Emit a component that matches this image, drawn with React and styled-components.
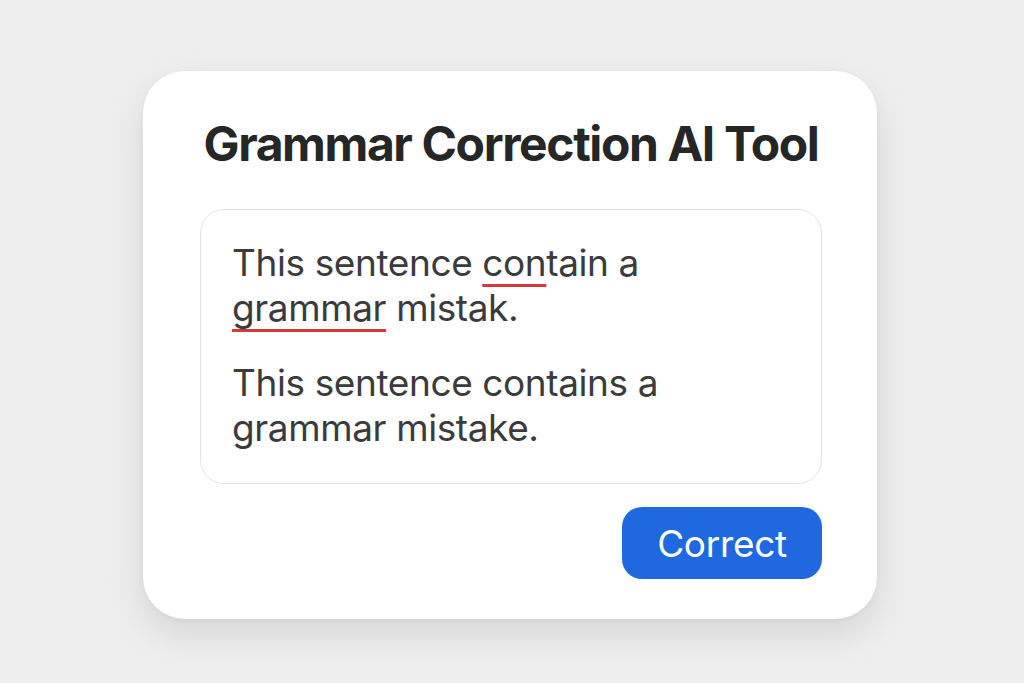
import React from "react";
import styled, { createGlobalStyle } from "styled-components";

const GlobalStyle = createGlobalStyle`
  html, body {
    margin: 0;
    padding: 0;
    background: #eeeeee;
  }
  body {
    font-family: Inter, "Noto Sans", sans-serif;
  }
`;

const Page = styled.div`
  min-height: 683px;
  box-sizing: border-box;
  display: flex;
  justify-content: center;
  align-items: flex-start;
  padding: 71px 4px 0 0;
  background: #eeeeee;
`;

const Card = styled.section`
  width: 734px;
  box-sizing: border-box;
  background: #ffffff;
  border-radius: 42px;
  padding: 44px 55px 40px 57px;
  display: flex;
  flex-direction: column;
  box-shadow: 0 16px 38px rgba(0, 0, 0, 0.1), 0 2px 6px rgba(0, 0, 0, 0.04);
`;

const Title = styled.h1`
  margin: 0 0 36px;
  font-family: Inter, sans-serif;
  font-weight: 700;
  font-size: 48px;
  line-height: 58px;
  letter-spacing: -1.4px;
  color: #262626;
  text-align: center;
`;

const TextBox = styled.div`
  box-sizing: border-box;
  height: 275px;
  border: 1px solid #e2e2e2;
  border-radius: 24px;
  padding: 30px 31px 0;
  display: flex;
  flex-direction: column;
  gap: 30px;
`;

const Paragraph = styled.p`
  margin: 0;
  font-family: Inter, sans-serif;
  font-size: 37px;
  line-height: 45px;
  letter-spacing: -0.4px;
  color: #3b3b3b;
`;

const Mistake = styled.span`
  text-decoration: underline;
  text-decoration-color: #d33a3f;
  text-decoration-thickness: 3px;
  text-underline-offset: 8px;
  text-decoration-skip-ink: none;
`;

const Actions = styled.div`
  display: flex;
  justify-content: flex-end;
  margin-top: 23px;
`;

const Button = styled.button`
  width: 200px;
  height: 72px;
  border: none;
  border-radius: 20px;
  background: #2068e0;
  color: #ffffff;
  font-family: Inter, sans-serif;
  font-size: 37px;
  font-weight: 400;
  letter-spacing: -0.3px;
  display: flex;
  align-items: center;
  justify-content: center;
  padding: 0;
  cursor: pointer;
`;

export default function App() {
  return (
    <>
      <GlobalStyle />
      <Page>
        <Card>
          <Title>Grammar Correction AI Tool</Title>
          <TextBox>
            <Paragraph>
              This sentence <Mistake>con</Mistake>tain a <Mistake>grammar</Mistake> mistak.
            </Paragraph>
            <Paragraph>This sentence contains a grammar mistake.</Paragraph>
          </TextBox>
          <Actions>
            <Button>Correct</Button>
          </Actions>
        </Card>
      </Page>
    </>
  );
}
